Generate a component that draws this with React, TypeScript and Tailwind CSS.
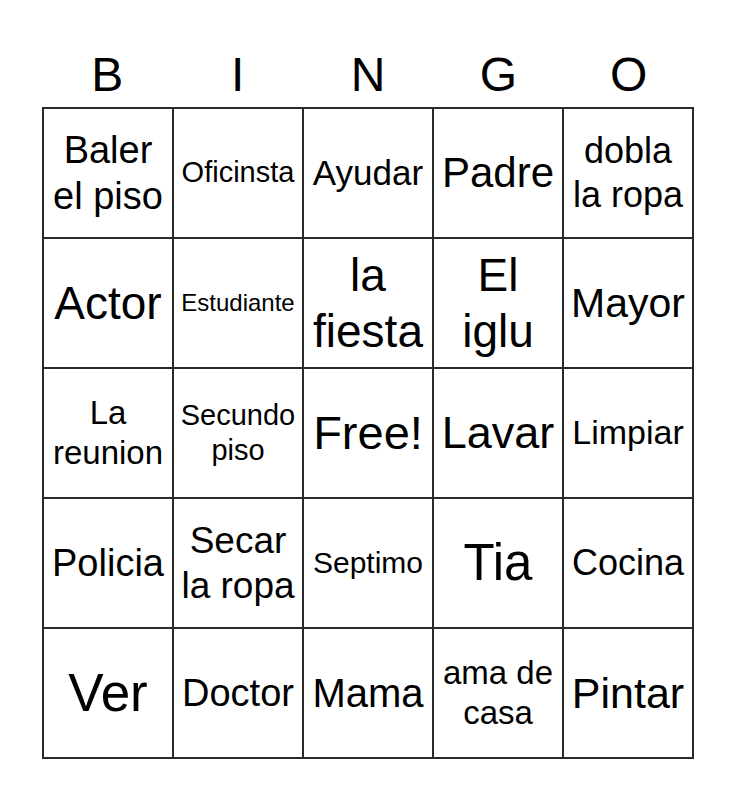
const letters = ["B", "I", "N", "G", "O"];

const cells: { text: string[]; size: number }[] = [
  { text: ["Baler", "el piso"], size: 38 },
  { text: ["Oficinsta"], size: 29 },
  { text: ["Ayudar"], size: 35 },
  { text: ["Padre"], size: 42 },
  { text: ["dobla", "la ropa"], size: 36 },

  { text: ["Actor"], size: 46 },
  { text: ["Estudiante"], size: 24 },
  { text: ["la", "fiesta"], size: 46 },
  { text: ["El", "iglu"], size: 46 },
  { text: ["Mayor"], size: 41 },

  { text: ["La", "reunion"], size: 33 },
  { text: ["Secundo", "piso"], size: 29 },
  { text: ["Free!"], size: 47 },
  { text: ["Lavar"], size: 45 },
  { text: ["Limpiar"], size: 34 },

  { text: ["Policia"], size: 38 },
  { text: ["Secar", "la ropa"], size: 37 },
  { text: ["Septimo"], size: 30 },
  { text: ["Tia"], size: 51 },
  { text: ["Cocina"], size: 36 },

  { text: ["Ver"], size: 53 },
  { text: ["Doctor"], size: 38 },
  { text: ["Mama"], size: 40 },
  { text: ["ama de", "casa"], size: 33 },
  { text: ["Pintar"], size: 43 },
];

export default function App() {
  return (
    <div
      className="w-[736px] h-[800px] bg-white text-black"
      style={{ fontFamily: '"Liberation Sans", Arial, sans-serif' }}
    >
      <div className="w-[652px] mx-auto pt-[47px]">
        <div className="grid grid-cols-5 h-[60px]">
          {letters.map((l) => (
            <div key={l} className="text-center text-[48px] leading-[55px]">
              {l}
            </div>
          ))}
        </div>
        <div className="grid grid-cols-[repeat(5,128px)] auto-rows-[128px] gap-[2px] p-[2px] bg-[#2a2a2a]">
          {cells.map((c, i) => (
            <div
              key={i}
              className="bg-white flex flex-col items-center justify-center text-center leading-[1.22]"
              style={{ fontSize: c.size }}
            >
              {c.text.map((t) => (
                <span key={t} className="whitespace-nowrap">
                  {t}
                </span>
              ))}
            </div>
          ))}
        </div>
      </div>
    </div>
  );
}
